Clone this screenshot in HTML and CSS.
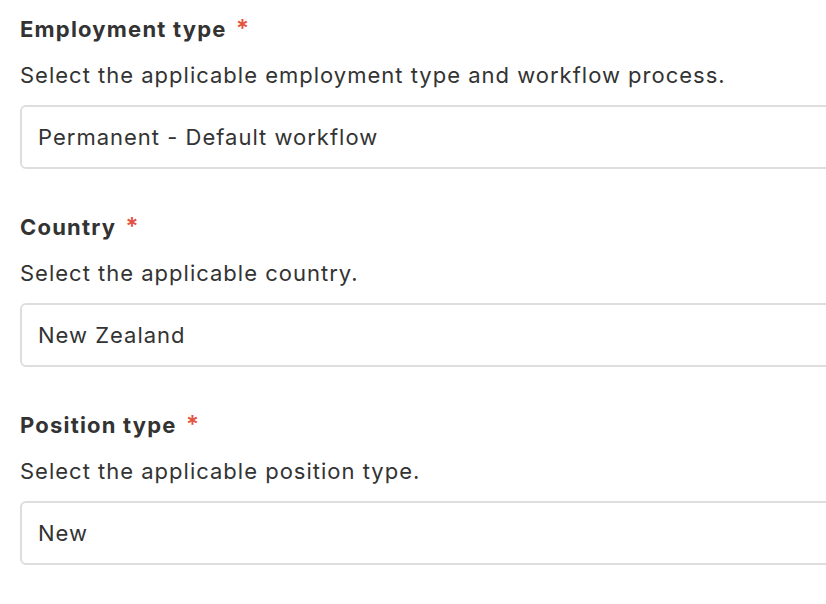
FILE: index.html
```html
<!DOCTYPE html>
<html lang="en">
<head>
<meta charset="utf-8">
<title>Form</title>
<link rel="stylesheet" href="styles.css">
</head>
<body>
<form class="form">
  <div class="field">
    <div class="label">Employment type <span class="req">*</span></div>
    <div class="help">Select the applicable employment type and workflow process.</div>
    <div class="input">Permanent - Default workflow</div>
  </div>
  <div class="field">
    <div class="label">Country <span class="req">*</span></div>
    <div class="help">Select the applicable country.</div>
    <div class="input">New Zealand</div>
  </div>
  <div class="field">
    <div class="label">Position type <span class="req">*</span></div>
    <div class="help">Select the applicable position type.</div>
    <div class="input">New</div>
  </div>
</form>
</body>
</html>
```
FILE: styles.css
```css
html, body {
  margin: 0;
  padding: 0;
  background: #ffffff;
  overflow: hidden;
}
body {
  font-family: "Inter", "Liberation Sans", sans-serif;
  font-size: 22px;
  line-height: 30px;
  letter-spacing: 1px;
  color: #333333;
}
.form {
  display: flex;
  flex-direction: column;
  gap: 43px;
  padding: 14px 0 0 20px;
  width: 900px;
}
.field {
  display: flex;
  flex-direction: column;
}
.label {
  font-weight: 700;
  letter-spacing: 1.2px;
  color: #333333;
}
.req {
  color: #e4533f;
  font-weight: 600;
  font-size: 24px;
  margin-left: 3px;
}
.help {
  margin-top: 16px;
  color: #333333;
}
.input {
  margin-top: 15px;
  height: 64px;
  box-sizing: border-box;
  border: 2px solid #dedede;
  border-radius: 6px;
  padding: 0 16px;
  display: flex;
  align-items: center;
  color: #333333;
}
```
